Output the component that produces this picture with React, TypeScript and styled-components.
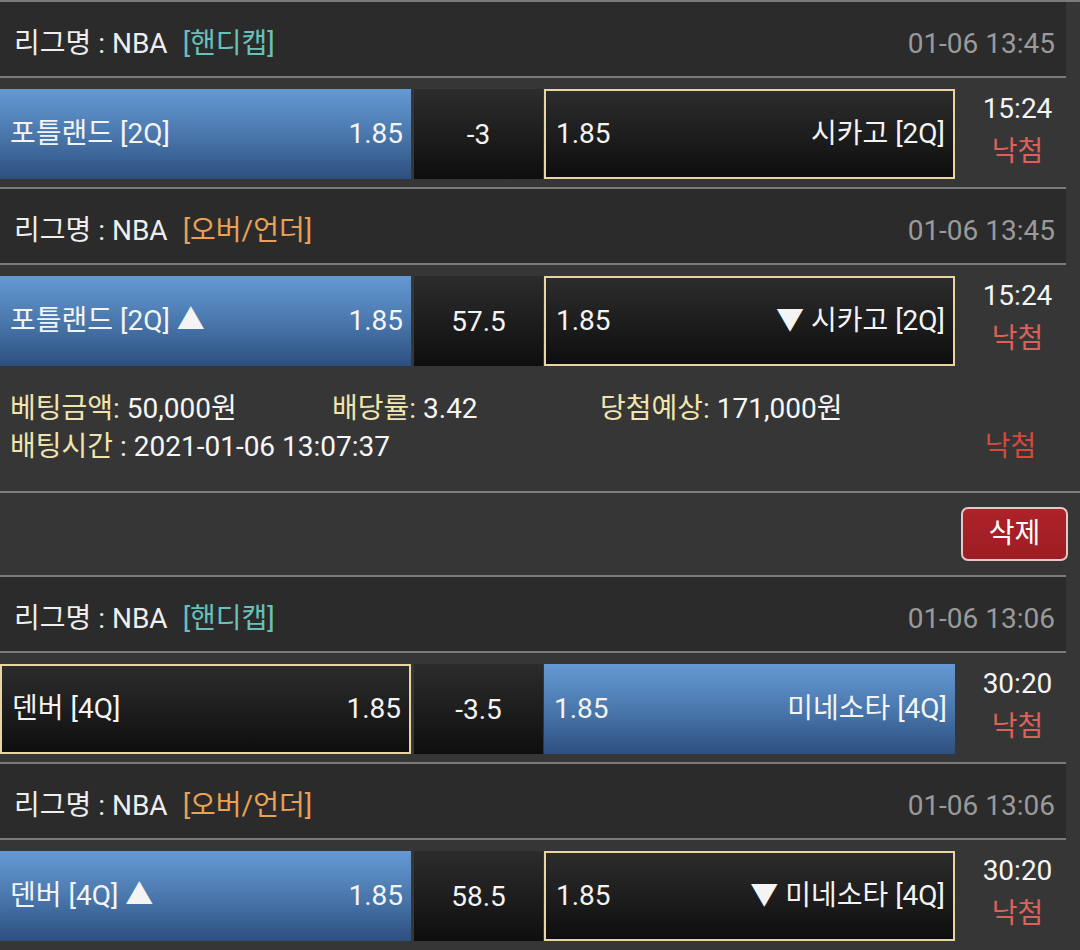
import React from 'react';
import styled, { createGlobalStyle } from 'styled-components';

const GlobalStyle = createGlobalStyle`
  html, body {
    margin: 0;
    padding: 0;
    background: #363636;
  }
  body {
    font-family: Roboto, "Noto Sans CJK KR", "Noto Sans", sans-serif;
    width: 1080px;
    height: 950px;
    overflow: hidden;
  }
`;

const Page = styled.div`
  width: 1080px;
  background: #363636;
  color: #f2f2f2;
  font-size: 28px;
`;

const Divider = styled.div`
  height: 2px;
  background: #7b7b7b;
`;

const Header = styled.div<{ $noTop?: boolean }>`
  margin-right: 14px;
  height: 64px;
  padding: 10px 9px 0 14px;
  background: #2b2b2b;
  border-top: ${(p) => (p.$noTop ? 'none' : '2px solid #7b7b7b')};
  border-bottom: 2px solid #7b7b7b;
  display: flex;
  align-items: center;
  justify-content: space-between;
  line-height: 34px;
`;

const League = styled.span`
  color: #eeeeee;
`;

const Tag = styled.span<{ $kind: 'handicap' | 'overunder' }>`
  margin-left: 15px;
  color: ${(p) => (p.$kind === 'handicap' ? '#68c0bb' : '#e9a153')};
`;

const DateText = styled.span`
  color: #9a9a9a;
  margin-right: 2px;
`;

const Row = styled.div`
  display: flex;
  align-items: flex-start;
  padding: 11px 0 8px;
`;

const Pick = styled.div<{ $picked: boolean; $side: 'home' | 'away' }>`
  box-sizing: border-box;
  width: 411px;
  height: 90px;
  display: flex;
  align-items: center;
  justify-content: space-between;
  padding: 0 8px 0 10px;
  line-height: 34px;
  color: #f4f4f4;
  background: ${(p) =>
    p.$picked
      ? 'linear-gradient(to bottom, #6599d3 0%, #4a78ad 50%, #2d4f7f 100%)'
      : 'linear-gradient(to bottom, #2c2c2c 0%, #1c1c1c 55%, #0e0e0e 100%)'};
  border: ${(p) => (p.$picked ? 'none' : '2px solid #e8d6a2')};
`;

const LineBox = styled.div`
  width: 129px;
  height: 90px;
  margin: 0 1px 0 3px;
  display: flex;
  align-items: center;
  justify-content: center;
  color: #f4f4f4;
  background: linear-gradient(to bottom, #2c2c2c 0%, #1c1c1c 55%, #0e0e0e 100%);
`;

const TimeCol = styled.div`
  flex: 1;
  margin-top: -2px;
  display: flex;
  flex-direction: column;
  align-items: center;
  line-height: 43px;
`;

const Clock = styled.span`
  color: #f4f4f4;
`;

const Result = styled.span<{ $strong?: boolean }>`
  color: ${(p) => (p.$strong ? '#d4493e' : '#de605a')};
`;

const Info = styled.div`
  height: 76px;
  padding: 16px 14px 25px 10px;
  line-height: 38px;
`;

const InfoTop = styled.div`
  display: grid;
  grid-template-columns: 322px 268px 1fr;
`;

const InfoBottom = styled.div`
  display: flex;
  justify-content: space-between;
`;

const Label = styled.span`
  color: #f1e5ad;
`;

const Value = styled.span`
  color: #f6f6f6;
`;

const ResultCell = styled.span`
  width: 111px;
  text-align: center;
`;

const DeleteBar = styled.div`
  display: flex;
  justify-content: flex-end;
  padding: 14px 12px 14px 0;
`;

const DeleteButton = styled.button`
  box-sizing: border-box;
  width: 107px;
  height: 54px;
  border: 2px solid #e6c6c6;
  border-radius: 7px;
  background: linear-gradient(to bottom, #ad2329, #9c1d23);
  color: #ffffff;
  font-family: inherit;
  font-size: 28px;
  font-weight: 400;
  padding: 0;
  line-height: 50px;
`;

type Game = {
  tag: string;
  kind: 'handicap' | 'overunder';
  date: string;
  home: string;
  homeOdds: string;
  line: string;
  away: string;
  awayOdds: string;
  picked: 'home' | 'away';
  time: string;
};

const slips: { games: Game[]; amount?: string; rate?: string; expect?: string; betTime?: string }[] = [
  {
    games: [
      {
        tag: '[핸디캡]',
        kind: 'handicap',
        date: '01-06 13:45',
        home: '포틀랜드 [2Q]',
        homeOdds: '1.85',
        line: '-3',
        away: '시카고 [2Q]',
        awayOdds: '1.85',
        picked: 'home',
        time: '15:24',
      },
      {
        tag: '[오버/언더]',
        kind: 'overunder',
        date: '01-06 13:45',
        home: '포틀랜드 [2Q] ▲',
        homeOdds: '1.85',
        line: '57.5',
        away: '▼ 시카고 [2Q]',
        awayOdds: '1.85',
        picked: 'home',
        time: '15:24',
      },
    ],
    amount: '50,000원',
    rate: '3.42',
    expect: '171,000원',
    betTime: '2021-01-06 13:07:37',
  },
  {
    games: [
      {
        tag: '[핸디캡]',
        kind: 'handicap',
        date: '01-06 13:06',
        home: '덴버 [4Q]',
        homeOdds: '1.85',
        line: '-3.5',
        away: '미네소타 [4Q]',
        awayOdds: '1.85',
        picked: 'away',
        time: '30:20',
      },
      {
        tag: '[오버/언더]',
        kind: 'overunder',
        date: '01-06 13:06',
        home: '덴버 [4Q] ▲',
        homeOdds: '1.85',
        line: '58.5',
        away: '▼ 미네소타 [4Q]',
        awayOdds: '1.85',
        picked: 'home',
        time: '30:20',
      },
    ],
  },
];

const GameBlock: React.FC<{ g: Game; noTop?: boolean }> = ({ g, noTop }) => (
  <>
    <Header $noTop={noTop}>
      <span>
        <League>리그명 : NBA</League>
        <Tag $kind={g.kind}>{g.tag}</Tag>
      </span>
      <DateText>{g.date}</DateText>
    </Header>
    <Row>
      <Pick $picked={g.picked === 'home'} $side="home">
        <span>{g.home}</span>
        <span>{g.homeOdds}</span>
      </Pick>
      <LineBox>{g.line}</LineBox>
      <Pick $picked={g.picked === 'away'} $side="away">
        <span>{g.awayOdds}</span>
        <span>{g.away}</span>
      </Pick>
      <TimeCol>
        <Clock>{g.time}</Clock>
        <Result>낙첨</Result>
      </TimeCol>
    </Row>
  </>
);

export default function App() {
  return (
    <Page>
      <GlobalStyle />
      <Divider />
      {slips.map((slip, si) => (
        <React.Fragment key={si}>
          {slip.games.map((g, gi) => (
            <GameBlock key={gi} g={g} noTop={si === 0 && gi === 0} />
          ))}
          {slip.amount && (
            <>
              <Info>
                <InfoTop>
                  <span>
                    <Label>베팅금액:</Label> <Value>{slip.amount}</Value>
                  </span>
                  <span>
                    <Label>배당률:</Label> <Value>{slip.rate}</Value>
                  </span>
                  <span>
                    <Label>당첨예상:</Label> <Value>{slip.expect}</Value>
                  </span>
                </InfoTop>
                <InfoBottom>
                  <span>
                    <Label>배팅시간</Label> <Value>: {slip.betTime}</Value>
                  </span>
                  <ResultCell>
                    <Result $strong>낙첨</Result>
                  </ResultCell>
                </InfoBottom>
              </Info>
              <Divider />
              <DeleteBar>
                <DeleteButton>삭제</DeleteButton>
              </DeleteBar>
            </>
          )}
        </React.Fragment>
      ))}
    </Page>
  );
}
